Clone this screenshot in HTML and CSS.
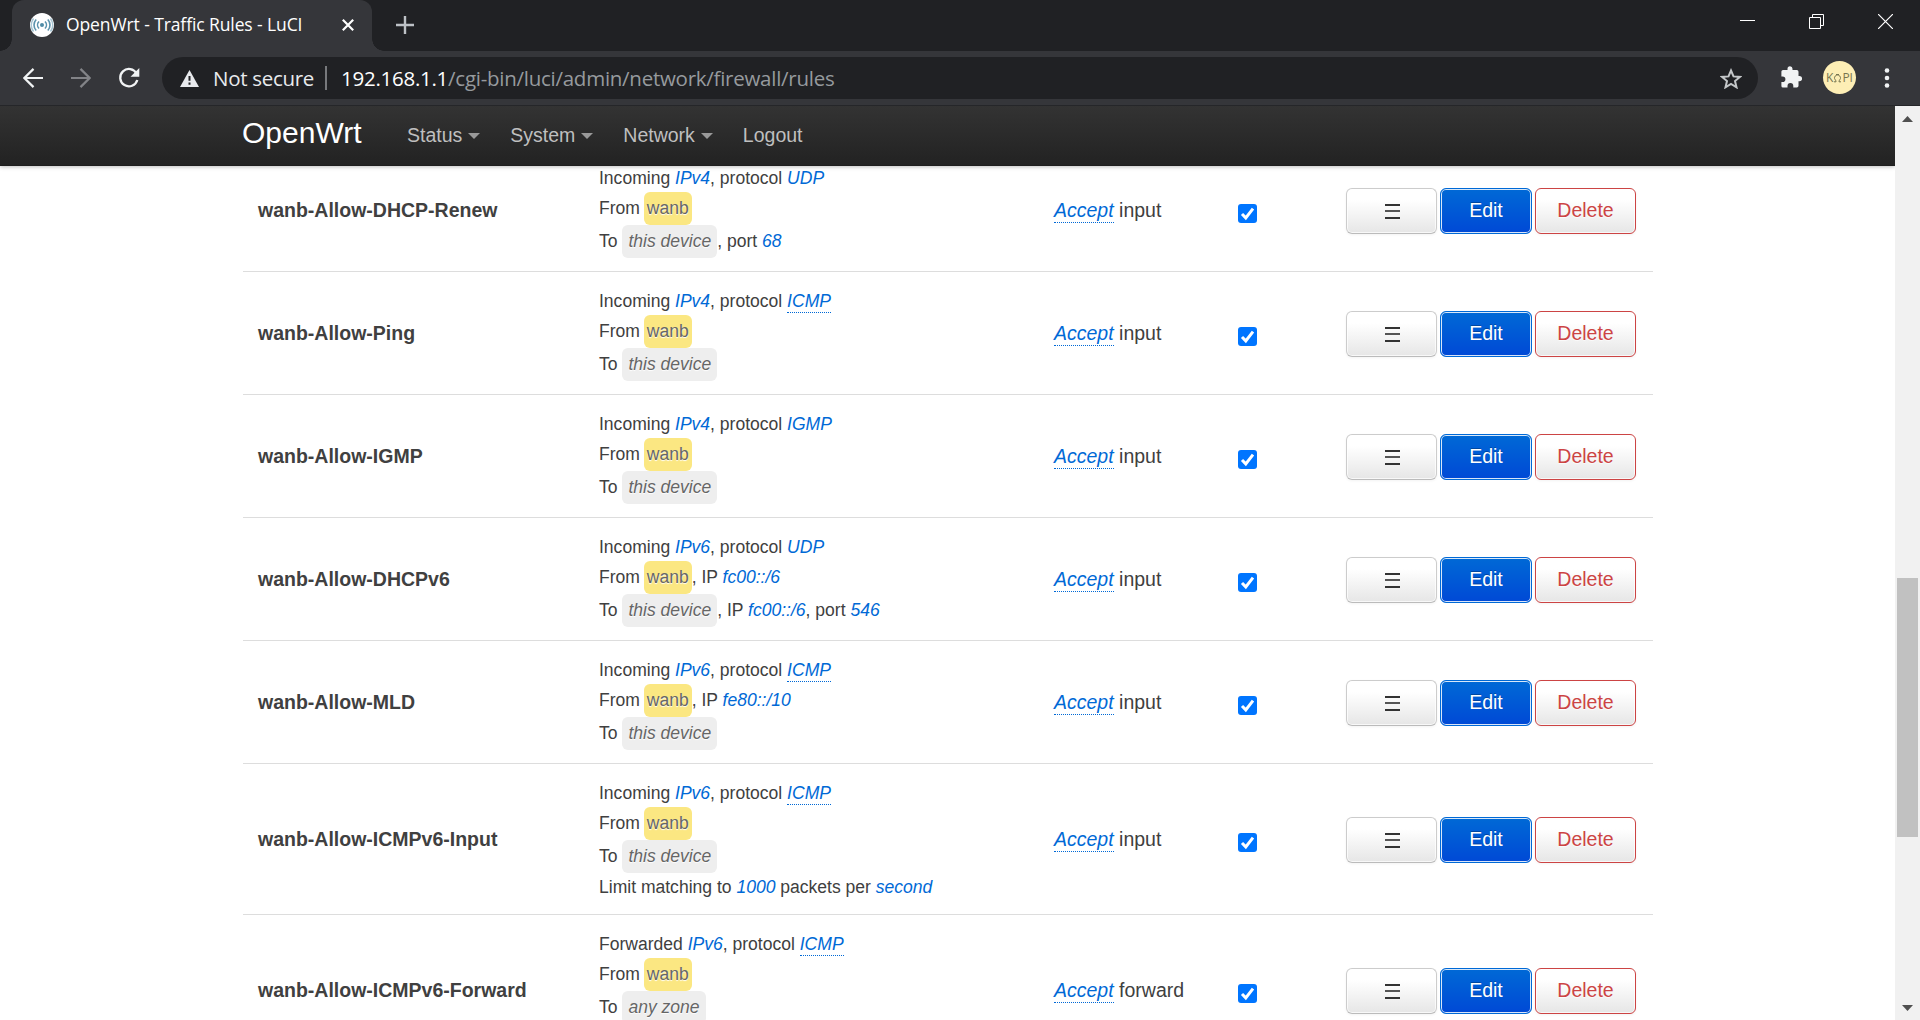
FILE: index.html
```html
<!DOCTYPE html>
<html lang="en">
<head>
<meta charset="utf-8">
<title>OpenWrt - Traffic Rules - LuCI</title>
<link rel="stylesheet" href="styles.css">
</head>
<body>
<div class="tabstrip">
  <div class="tab">
    <svg class="favicon" width="24" height="24" viewBox="0 0 24 24"><circle cx="12" cy="12" r="12" fill="#fff"/><circle cx="12" cy="12" r="2" fill="#4f8ba6"/><g fill="none" stroke="#5b93ad" stroke-width="1.6"><path d="M9 8.5a5 5 0 0 0 0 7M15 8.500a5 5 0 0 1 0 7M6.200 6.500a8 8 0 0 0 0 11M17.800 6.500a8 8 0 0 1 0 11"/><path d="M3.500 5.500a11 11 0 0 0 0 13M20.500 5.500a11 11 0 0 1 0 13" opacity=".55"/></g></svg>
    <span class="tab-title">OpenWrt - Traffic Rules - LuCI</span>
    <svg class="tab-close" width="12" height="12" viewBox="0 0 12 12"><path d="M.8.8l10.400 10.400M11.200.8L.8 11.200" stroke="#fff" stroke-width="2.200"/></svg>
  </div>
  <svg class="newtab" width="18" height="18" viewBox="0 0 18 18"><path d="M9 0v18M0 9h18" stroke="#bdc1c6" stroke-width="2.400"/></svg>
  <div class="window-controls">
    <svg width="15" height="15" viewBox="0 0 15 15"><path d="M0 6.500h15" stroke="#fff"/></svg>
    <svg width="15" height="15" viewBox="0 0 15 15"><path d="M.5 3.500h11v11H.5zM3.500 3.500v-3h11v11h-3" fill="none" stroke="#fff"/></svg>
    <svg width="15" height="15" viewBox="0 0 15 15"><path d="M0 0l15 15M15 0L0 15" stroke="#fff" stroke-width="1.200"/></svg>
  </div>
</div>
<div class="toolbar">
  <svg class="tool back" width="20" height="20" viewBox="0 0 20 20"><path d="M20 10H1.500M10.500.9L1.400 10l9.100 9.100" fill="none" stroke="#f1f3f4" stroke-width="2.200"/></svg>
  <svg class="tool forward" width="20" height="20" viewBox="0 0 20 20"><path d="M0 10h18.500M9.500.9l9.100 9.100-9.100 9.100" fill="none" stroke="#828387" stroke-width="2.200"/></svg>
  <svg class="tool reload" width="22" height="22" viewBox="0 0 22 22"><path d="M18.600 6.500A8.700 8.700 0 1 0 19.300 13" fill="none" stroke="#f1f3f4" stroke-width="2.300"/><path d="M21.300 1v8.800h-8.800z" fill="#f1f3f4"/></svg>
  <div class="omnibox">
    <svg class="warn" width="19" height="17" viewBox="0 0 19 17"><path d="M9.500 0L19 17H0z" fill="#e8eaed"/><path d="M9.500 6v4.800M9.500 12.600v2.200" stroke="#202124" stroke-width="2"/></svg>
    <span class="secure">Not secure</span>
    <span class="divider"></span>
    <span class="url"><b>192.168.1.1</b>/cgi-bin/luci/admin/network/firewall/rules</span>
    <svg class="star" width="22" height="21" viewBox="0 0 22 21"><path d="M11 2.500l2.500 5.900 6.400.5-4.900 4.200 1.500 6.200L11 16l-5.500 3.300L7 13.100 2.100 8.900l6.400-.5z" fill="none" stroke="#c4c7c9" stroke-width="2"/></svg>
  </div>
  <svg class="puzzle" width="21" height="22" viewBox="0 0 21 22"><path d="M2 4h4.500V2.700a2.500 2.500 0 0 1 5 0V4h4.300a1.700 1.700 0 0 1 1.700 1.700V10h1a2.600 2.600 0 0 1 0 5.200h-1v4.600a1.700 1.700 0 0 1-1.700 1.700h-3.500V20a2.900 2.900 0 0 0-5.800 0v1.500H2A1.600 1.600 0 0 1 .4 19.900V16h1.200a2.800 2.800 0 0 0 0-5.600H.4V5.600A1.600 1.600 0 0 1 2 4z" fill="#f1f3f4"/></svg>
  <span class="avatar">K<svg width="9" height="10" viewBox="0 0 9 10"><path d="M1 8.800h2V7.600a3 3 0 1 1 3 0v1.200h2M3 1.500h3" fill="none" stroke="#77754f" stroke-width="1"/></svg>PI</span>
  <svg class="menu" width="6" height="20" viewBox="0 0 6 20"><g fill="#f1f3f4"><circle cx="3" cy="2.500" r="2.300"/><circle cx="3" cy="10" r="2.300"/><circle cx="3" cy="17.500" r="2.300"/></g></svg>
</div>
<div class="viewport">
  <div class="page">
    <header class="navbar">
      <span class="brand">OpenWrt</span>
      <span class="nav caret">Status</span>
      <span class="nav caret">System</span>
      <span class="nav caret">Network</span>
      <span class="nav">Logout</span>
    </header>
    <main class="rules">
      <section class="rule">
        <div class="name">wanb-Allow-DHCP-Renew</div>
        <div class="match"><p>Incoming <em>IPv4</em>, protocol <em>UDP</em></p><p class="zone">From <span class="badge">wanb</span></p><p class="zone">To <span class="badge device">this device</span>, port <em>68</em></p></div>
        <div class="action"><em class="tip">Accept</em> input</div>
        <div class="enable"><svg class="check" viewBox="0 0 19 19"><path d="M4 10l3.800 3.900L15 4.600" /></svg></div>
        <div class="buttons"><span class="btn drag"><i></i></span><span class="btn edit">Edit</span><span class="btn delete">Delete</span></div>
      </section>
      <section class="rule">
        <div class="name">wanb-Allow-Ping</div>
        <div class="match"><p>Incoming <em>IPv4</em>, protocol <em class="tip">ICMP</em></p><p class="zone">From <span class="badge">wanb</span></p><p class="zone">To <span class="badge device">this device</span></p></div>
        <div class="action"><em class="tip">Accept</em> input</div>
        <div class="enable"><svg class="check" viewBox="0 0 19 19"><path d="M4 10l3.800 3.900L15 4.600" /></svg></div>
        <div class="buttons"><span class="btn drag"><i></i></span><span class="btn edit">Edit</span><span class="btn delete">Delete</span></div>
      </section>
      <section class="rule">
        <div class="name">wanb-Allow-IGMP</div>
        <div class="match"><p>Incoming <em>IPv4</em>, protocol <em>IGMP</em></p><p class="zone">From <span class="badge">wanb</span></p><p class="zone">To <span class="badge device">this device</span></p></div>
        <div class="action"><em class="tip">Accept</em> input</div>
        <div class="enable"><svg class="check" viewBox="0 0 19 19"><path d="M4 10l3.800 3.900L15 4.600" /></svg></div>
        <div class="buttons"><span class="btn drag"><i></i></span><span class="btn edit">Edit</span><span class="btn delete">Delete</span></div>
      </section>
      <section class="rule">
        <div class="name">wanb-Allow-DHCPv6</div>
        <div class="match"><p>Incoming <em>IPv6</em>, protocol <em>UDP</em></p><p class="zone">From <span class="badge">wanb</span>, IP <em>fc00::/6</em></p><p class="zone">To <span class="badge device">this device</span>, IP <em>fc00::/6</em>, port <em>546</em></p></div>
        <div class="action"><em class="tip">Accept</em> input</div>
        <div class="enable"><svg class="check" viewBox="0 0 19 19"><path d="M4 10l3.800 3.900L15 4.600" /></svg></div>
        <div class="buttons"><span class="btn drag"><i></i></span><span class="btn edit">Edit</span><span class="btn delete">Delete</span></div>
      </section>
      <section class="rule">
        <div class="name">wanb-Allow-MLD</div>
        <div class="match"><p>Incoming <em>IPv6</em>, protocol <em class="tip">ICMP</em></p><p class="zone">From <span class="badge">wanb</span>, IP <em>fe80::/10</em></p><p class="zone">To <span class="badge device">this device</span></p></div>
        <div class="action"><em class="tip">Accept</em> input</div>
        <div class="enable"><svg class="check" viewBox="0 0 19 19"><path d="M4 10l3.800 3.900L15 4.600" /></svg></div>
        <div class="buttons"><span class="btn drag"><i></i></span><span class="btn edit">Edit</span><span class="btn delete">Delete</span></div>
      </section>
      <section class="rule tall">
        <div class="name">wanb-Allow-ICMPv6-Input</div>
        <div class="match"><p>Incoming <em>IPv6</em>, protocol <em class="tip">ICMP</em></p><p class="zone">From <span class="badge">wanb</span></p><p class="zone">To <span class="badge device">this device</span></p><p class="limit">Limit matching to <em>1000</em> packets per <em>second</em></p></div>
        <div class="action"><em class="tip">Accept</em> input</div>
        <div class="enable"><svg class="check" viewBox="0 0 19 19"><path d="M4 10l3.800 3.900L15 4.600" /></svg></div>
        <div class="buttons"><span class="btn drag"><i></i></span><span class="btn edit">Edit</span><span class="btn delete">Delete</span></div>
      </section>
      <section class="rule tall">
        <div class="name">wanb-Allow-ICMPv6-Forward</div>
        <div class="match"><p>Forwarded <em>IPv6</em>, protocol <em class="tip">ICMP</em></p><p class="zone">From <span class="badge">wanb</span></p><p class="zone">To <span class="badge device">any zone</span></p></div>
        <div class="action"><em class="tip">Accept</em> forward</div>
        <div class="enable"><svg class="check" viewBox="0 0 19 19"><path d="M4 10l3.800 3.900L15 4.600" /></svg></div>
        <div class="buttons"><span class="btn drag"><i></i></span><span class="btn edit">Edit</span><span class="btn delete">Delete</span></div>
      </section>
    </main>
  </div>
  <div class="scrollbar">
    <svg class="up" width="11" height="6" viewBox="0 0 11 6"><path d="M0 6L5.500 0 11 6z" fill="#505050"/></svg>
    <div class="thumb"></div>
    <svg class="down" width="11" height="6" viewBox="0 0 11 6"><path d="M0 0l5.500 6L11 0z" fill="#505050"/></svg>
  </div>
</div>
</body>
</html>
```
FILE: styles.css
```css
* { box-sizing: border-box; }
body {
  margin: 0;
  width: 1920px;
  height: 1020px;
  overflow: hidden;
  display: flex;
  flex-direction: column;
  background: #fff;
  font-family: "Liberation Sans", Arial, sans-serif;
}
svg { display: block; flex: none; }

/* browser tab strip */
.tabstrip {
  flex: none;
  height: 51px;
  display: flex;
  align-items: flex-start;
  background: #202124;
  padding-left: 12px;
}
.tab {
  position: relative;
  width: 360px;
  height: 51px;
  display: flex;
  align-items: flex-start;
  padding: 13px 18px 0;
  background: #35363a;
  border-radius: 12px 12px 0 0;
}
.tab::before, .tab::after {
  content: "";
  position: absolute;
  bottom: 0;
  width: 12px;
  height: 12px;
}
.tab::before { left: -12px; background: radial-gradient(circle at 0 0, transparent 11.5px, #35363a 12px); }
.tab::after { right: -12px; background: radial-gradient(circle at 100% 0, transparent 11.5px, #35363a 12px); }
.tab-title {
  margin-left: 12px;
  width: 276px;
  font: 17.5px/23px "Open Sans", sans-serif;
  letter-spacing: -0.1px;
  color: #fff;
  white-space: nowrap;
}
.tab-close { margin-top: 6px; }
.newtab { margin: 16px 0 0 24px; }
.window-controls {
  margin-left: auto;
  padding: 14px 27px 0 0;
  display: flex;
  gap: 54px;
}

/* browser toolbar */
.toolbar {
  flex: none;
  height: 55px;
  display: flex;
  align-items: center;
  background: #35363a;
  border-bottom: 1px solid #252629;
  padding-left: 23px;
}
.back { margin-right: 28px; }
.forward { margin-right: 27px; }
.reload { margin-right: 22px; }
.omnibox {
  width: 1596px;
  height: 42px;
  border-radius: 21px;
  display: flex;
  align-items: center;
  background: #202124;
  padding: 0 16px 0 18px;
  font: 20.5px/30px "Open Sans", sans-serif;
  white-space: nowrap;
}
.secure { margin-left: 14px; width: 112px; color: #e8eaed; letter-spacing: -0.3px; }
.divider { width: 2px; height: 24px; background: #77797c; }
.url { margin-left: 14px; color: #969a9e; letter-spacing: -0.26px; }
.url b { font-weight: 400; color: #fff; }
.star { margin-left: auto; }
.puzzle { margin-left: 23px; margin-bottom: 2px; }
.avatar {
  margin-left: 21px;
  margin-bottom: 1px;
  width: 33px;
  height: 33px;
  border-radius: 50%;
  background: #fdeeb5;
  color: #77754f;
  font: 12px/33px "Open Sans", sans-serif;
  display: flex;
  align-items: center;
  justify-content: center;
}
.menu { margin-left: 28px; }

/* page area */
.viewport { height: 914px; display: flex; overflow: hidden; }
.page { width: 1895px; overflow: hidden; }
.navbar {
  position: relative;
  z-index: 1;
  height: 60px;
  display: flex;
  align-items: center;
  padding: 0 0 2px 242px;
  background: linear-gradient(#333, #222);
  box-shadow: 0 1px 4px rgba(0, 0, 0, .25), inset 0 -1px 0 rgba(0, 0, 0, .1);
  font-size: 19.5px;
}
.brand { width: 165px; padding-bottom: 5px; font-size: 30px; color: #fff; }
.nav { color: #bfbfbf; line-height: 24px; margin-right: 30px; display: flex; align-items: center; }
.caret::after {
  content: "";
  margin: 1px 0 0 6px;
  border: 6px solid transparent;
  border-top-color: #999;
  border-bottom: 0;
}

/* rules table */
.rules { width: 1410px; margin: -18px 0 0 243px; color: #404040; font-size: 19.5px; }
.rule {
  height: 123px;
  border-top: 1px solid #ddd;
  display: grid;
  grid-template-columns: 341px 455px 184px 108px 290px;
  align-items: center;
  padding-left: 15px;
}
.tall { height: 151px; }
.name { font-weight: 700; line-height: 27px; }
.match { align-self: start; padding-top: 15px; font-size: 17.55px; }
.match p { margin: 0; line-height: 29px; height: 28px; white-space: nowrap; }
.match .zone { height: 33px; line-height: 33px; }
em { color: #0069d6; }
.tip { border-bottom: 1px dotted #0069d6; }
.match .tip { padding-bottom: 1px; }
.badge {
  display: inline-block;
  height: 33px;
  line-height: 33px;
  margin-left: -1px;
  padding: 0 3px;
  border-radius: 6px;
  background: #fbe782;
  color: #666;
  text-shadow: 0 1px 1px #fff;
  vertical-align: top;
}
.device { margin-left: 0; padding: 0 6px; background: #eee; font-style: italic; }
.action { line-height: 27px; }
.action .tip { padding-bottom: 1px; }
.check {
  width: 19px;
  height: 19px;
  margin-top: 6px;
  border-radius: 3px;
  background: #0075ff;
  fill: none;
  stroke: #fff;
  stroke-width: 3;
}
.buttons { display: flex; gap: 3px; padding-top: 1px; }
.btn {
  height: 46px;
  border: 1px solid #ccc;
  border-bottom-color: #bbb;
  border-radius: 6px;
  background: linear-gradient(#fff, #fff 25%, #e6e6e6);
  box-shadow: inset 0 0 0 1px rgba(255, 255, 255, .7), 0 1px 3px rgba(0, 0, 0, .05);
  text-shadow: 0 1px 1px rgba(255, 255, 255, .75);
  line-height: 43px;
  text-align: center;
}
.drag { width: 91px; display: flex; justify-content: center; padding: 15px 0 0 1px; }
.drag i { width: 15px; height: 15px; background: linear-gradient(#333 2px, transparent 2px 6px, #555 6px 8px, transparent 8px 13px, #333 13px); }
.edit {
  width: 92px;
  color: #fff;
  border-color: #0069d6;
  background: linear-gradient(#0069d6, #0049d6);
  box-shadow: inset 0 0 0 1px rgba(255, 255, 255, .85);
  text-shadow: 0 -1px 0 rgba(0, 0, 0, .25);
}
.delete { width: 101px; color: #c44; border-color: #c44; }

/* page scrollbar */
.scrollbar { width: 25px; background: #f1f1f1; display: flex; flex-direction: column; align-items: center; }
.up { margin-top: 10px; }
.thumb { width: 21px; height: 259px; margin-top: 456px; background: #c1c1c1; }
.down { margin: auto 0 9px; }
```
